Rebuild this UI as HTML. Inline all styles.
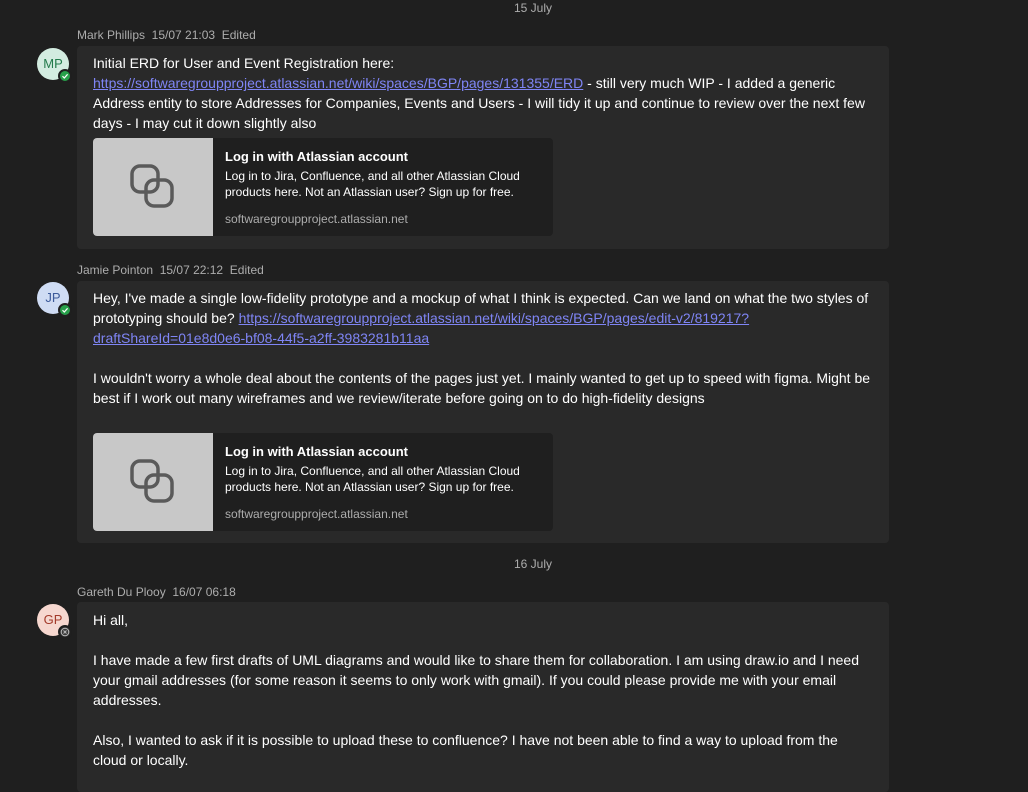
<!DOCTYPE html>
<html><head><meta charset="utf-8"><style>
body{margin:0;width:1028px;height:783px;overflow:hidden;background:#1f1f1f;font-family:"Segoe UI","Liberation Sans",sans-serif;color:#fff;position:relative}
.abs{position:absolute}
.date{font-size:12px;color:#adadad;text-align:center}
.hdr{font-size:12px;color:#adadad;left:77px;white-space:pre}
.av{left:37px;width:32px;height:32px;border-radius:50%;font-size:13px;text-align:center;line-height:32px}
.st{position:absolute;right:-3px;bottom:-3px;width:10px;height:10px;border-radius:50%;border:2px solid #1f1f1f}
.bub{left:77px;width:812px;background:#292929;border-radius:4px}
.txt{position:absolute;left:16px;top:7px;width:780px;font-size:14px;line-height:20px;color:#fff}
a{color:#7f85f5;text-decoration:underline}
.card{position:absolute;left:16px;width:460px;height:98px;background:#1f1f1f;border-radius:4px;overflow:hidden}
.img{position:absolute;left:0;top:0;width:120px;height:98px;background:#c8c8c8}
.ct{position:absolute;left:132px;top:11px;font-size:13px;font-weight:bold}
.cd{position:absolute;left:132px;top:30px;font-size:12px;line-height:16px;width:320px}
.cu{position:absolute;left:132px;top:74px;font-size:12px;color:#adadad}
</style></head><body>
<div class="abs date" style="top:1px;left:0;width:1066px">15 July</div>

<div class="abs hdr" style="top:28px">Mark Phillips  15/07 21:03  Edited</div>
<div class="abs av" style="top:48px;background:#d3ece0;color:#237b4b">MP<div class="st" style="background:#27a04a"><svg class="abs" style="left:0;top:0" width="10" height="10"><path d="M2.5 5.2L4.3 7 7.6 3.3" fill="none" stroke="#fff" stroke-width="1.2"/></svg></div></div>
<div class="abs bub" style="top:46px;height:203px">
<div class="txt">Initial ERD for User and Event Registration here:<br><a>https://softwaregroupproject.atlassian.net/wiki/spaces/BGP/pages/131355/ERD</a> - still very much WIP - I added a generic Address entity to store Addresses for Companies, Events and Users - I will tidy it up and continue to review over the next few days - I may cut it down slightly also</div>
<div class="card" style="top:92px"><div class="img"><svg width="120" height="98"><g fill="none" stroke="#5a5a5a" stroke-width="3.5"><rect x="39" y="28" width="26" height="26" rx="8"/><rect x="53" y="42" width="26" height="26" rx="8"/></g></svg></div>
<div class="ct">Log in with Atlassian account</div><div class="cd">Log in to Jira, Confluence, and all other Atlassian Cloud products here. Not an Atlassian user? Sign up for free.</div><div class="cu">softwaregroupproject.atlassian.net</div></div>
</div>

<div class="abs hdr" style="top:263px">Jamie Pointon  15/07 22:12  Edited</div>
<div class="abs av" style="top:282px;background:#cfdcf4;color:#3c5a9a">JP<div class="st" style="background:#27a04a"><svg class="abs" style="left:0;top:0" width="10" height="10"><path d="M2.5 5.2L4.3 7 7.6 3.3" fill="none" stroke="#fff" stroke-width="1.2"/></svg></div></div>
<div class="abs bub" style="top:281px;height:262px">
<div class="txt">Hey, I've made a single low-fidelity prototype and a mockup of what I think is expected. Can we land on what the two styles of prototyping should be? <a>https://softwaregroupproject.atlassian.net/wiki/spaces/BGP/pages/edit-v2/819217?draftShareId=01e8d0e6-bf08-44f5-a2ff-3983281b11aa</a><br><br>I wouldn't worry a whole deal about the contents of the pages just yet. I mainly wanted to get up to speed with figma. Might be best if I work out many wireframes and we review/iterate before going on to do high-fidelity designs</div>
<div class="card" style="top:152px"><div class="img"><svg width="120" height="98"><g fill="none" stroke="#5a5a5a" stroke-width="3.5"><rect x="39" y="28" width="26" height="26" rx="8"/><rect x="53" y="42" width="26" height="26" rx="8"/></g></svg></div>
<div class="ct">Log in with Atlassian account</div><div class="cd">Log in to Jira, Confluence, and all other Atlassian Cloud products here. Not an Atlassian user? Sign up for free.</div><div class="cu">softwaregroupproject.atlassian.net</div></div>
</div>

<div class="abs date" style="top:557px;left:0;width:1066px">16 July</div>
<div class="abs hdr" style="top:585px">Gareth Du Plooy  16/07 06:18</div>
<div class="abs av" style="top:604px;background:#f6d7cf;color:#a33a2a">GP<div class="st" style="background:#3a3a3a"><svg class="abs" style="left:0;top:0" width="10" height="10"><circle cx="5" cy="5" r="3.8" fill="none" stroke="#bbb" stroke-width="1"/><path d="M3.5 3.5L6.5 6.5M6.5 3.5L3.5 6.5" stroke="#bbb" stroke-width="1"/></svg></div></div>
<div class="abs bub" style="top:602px;height:190px">
<div class="txt" style="top:8px">Hi all,<br><br>I have made a few first drafts of UML diagrams and would like to share them for collaboration. I am using draw.io and I need your gmail addresses (for some reason it seems to only work with gmail). If you could please provide me with your email addresses.<br><br>Also, I wanted to ask if it is possible to upload these to confluence? I have not been able to find a way to upload from the cloud or locally.</div>
</div>
</body></html>
